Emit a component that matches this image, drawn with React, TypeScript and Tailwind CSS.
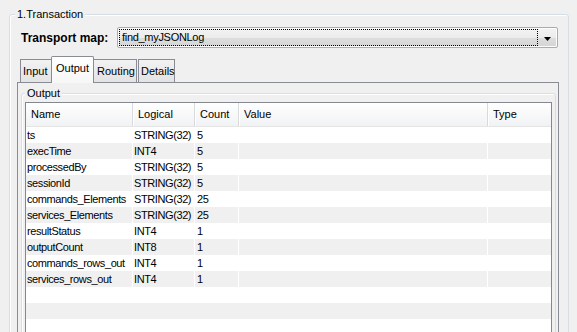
const rows = [
  { name: 'ts', logical: 'STRING(32)', count: '5' },
  { name: 'execTime', logical: 'INT4', count: '5' },
  { name: 'processedBy', logical: 'STRING(32)', count: '5' },
  { name: 'sessionId', logical: 'STRING(32)', count: '5' },
  { name: 'commands_Elements', logical: 'STRING(32)', count: '25' },
  { name: 'services_Elements', logical: 'STRING(32)', count: '25' },
  { name: 'resultStatus', logical: 'INT4', count: '1' },
  { name: 'outputCount', logical: 'INT8', count: '1' },
  { name: 'commands_rows_out', logical: 'INT4', count: '1' },
  { name: 'services_rows_out', logical: 'INT4', count: '1' },
];

const headers = [
  { label: 'Name', w: 'w-[107px]' },
  { label: 'Logical', w: 'w-[62px]' },
  { label: 'Count', w: 'w-[44px]' },
  { label: 'Value', w: 'w-[249px]' },
  { label: 'Type', w: 'w-[63px]' },
];

export default function App() {
  return (
    <div className="w-[577px] h-[332px] overflow-hidden bg-[#f0f0f0] pt-[14px] pl-[9px] font-['Liberation_Sans',Arial,sans-serif] text-[11px] text-black leading-none">
      {/* 1.Transaction group */}
      <div className="relative w-[560px] h-[340px] border border-[#d5dfe5] rounded-[3px] shadow-[inset_1px_1px_0_#fff]">
        <span className="absolute left-[5px] top-[-7px] px-[2px] bg-[#f0f0f0] leading-[13px]">1.Transaction</span>

        {/* Transport map */}
        <div className="flex items-center mt-[12px] pl-[11px]">
          <span className="w-[96px] font-bold text-[12px]">Transport map:</span>
          <div className="relative w-[441px] h-[21px] border border-[#acacac] rounded-[2px] bg-[linear-gradient(#f3f3f3_0%,#ececec_50%,#dddddd_51%,#d5d5d5_100%)] shadow-[inset_0_0_0_1px_#fcfcfc]">
            <div className="absolute left-[1px] top-[1px] w-[419px] h-[17px] border border-dotted border-black flex items-center pl-[2px] tracking-[-0.3px]">
              find_myJSONLog
            </div>
            <svg className="absolute right-[6px] top-[9px]" width="7" height="4" viewBox="0 0 7 4">
              <path d="M0 0H7L3.5 4Z" fill="#000" />
            </svg>
          </div>
        </div>

        {/* Tabs */}
        <div className="flex items-end mt-[8px] pl-[10px] h-[26px]">
          <div className="w-[32px] h-[23px] border border-b-0 border-[#898c95] bg-[linear-gradient(#f2f2f2,#e3e3e3)] flex items-center pl-[2px] -mr-px">Input</div>
          <div className="relative z-10 w-[43px] h-[27px] -mb-px border border-b-0 border-[#898c95] rounded-t-[2px] bg-[linear-gradient(#ffffff,#f7f7f7)] flex items-center pl-[4px] pb-[3px]">Output</div>
          <div className="w-[44px] h-[23px] border border-b-0 border-[#898c95] bg-[linear-gradient(#f2f2f2,#e3e3e3)] flex items-center pl-[3px] -ml-px">Routing</div>
          <div className="w-[37px] h-[23px] border border-b-0 border-[#898c95] bg-[linear-gradient(#f2f2f2,#e3e3e3)] flex items-center pl-[2px] ml-[1px]">Details</div>
        </div>

        {/* Tab panel */}
        <div className="ml-[7px] w-[542px] h-[260px] border border-[#898c95] bg-[#f0f0f0] pt-[10px] pl-[3px]">
          {/* Output group */}
          <div className="relative w-[535px] h-[260px] border border-[#d5dfe5] rounded-[3px] shadow-[inset_1px_1px_0_#fff] pt-[8px] px-[3px]">
            <span className="absolute left-[3px] top-[-7px] px-[2px] bg-[#f0f0f0] leading-[13px]">Output</span>

            {/* Table */}
            <div className="w-[527px] h-[260px] border border-[#828790] bg-white">
              <div className="flex h-[24px] border-b border-[#e5e5e5] bg-[linear-gradient(#ffffff,#f1f2f4)]">
                {headers.map((h, i) => (
                  <div
                    key={h.label}
                    className={`${h.w} h-full flex items-center pl-[5px] ${i < headers.length - 1 ? 'border-r border-[#d9dadc] shadow-[1px_0_0_#fff]' : ''}`}
                  >
                    {h.label}
                  </div>
                ))}
              </div>
              {rows.map((r, i) => (
                <div key={r.name} className={`flex h-[16px] tracking-[-0.4px] ${i % 2 === 1 ? 'bg-[#f0f0f0]' : 'bg-white'}`}>
                  <div className="w-[107px] flex items-center pl-px border-r border-white whitespace-nowrap">{r.name}</div>
                  <div className="w-[62px] flex items-center pl-px border-r border-white whitespace-nowrap">{r.logical}</div>
                  <div className="w-[44px] flex items-center pl-[2px] border-r border-white">{r.count}</div>
                  <div className="w-[249px] border-r border-white" />
                  <div className="w-[62px]" />
                </div>
              ))}
              <div className="h-[16px] bg-white" />
              <div className="h-[16px] bg-[#f0f0f0]" />
              <div className="h-[16px] bg-white" />
            </div>
          </div>
        </div>
      </div>
    </div>
  );
}
